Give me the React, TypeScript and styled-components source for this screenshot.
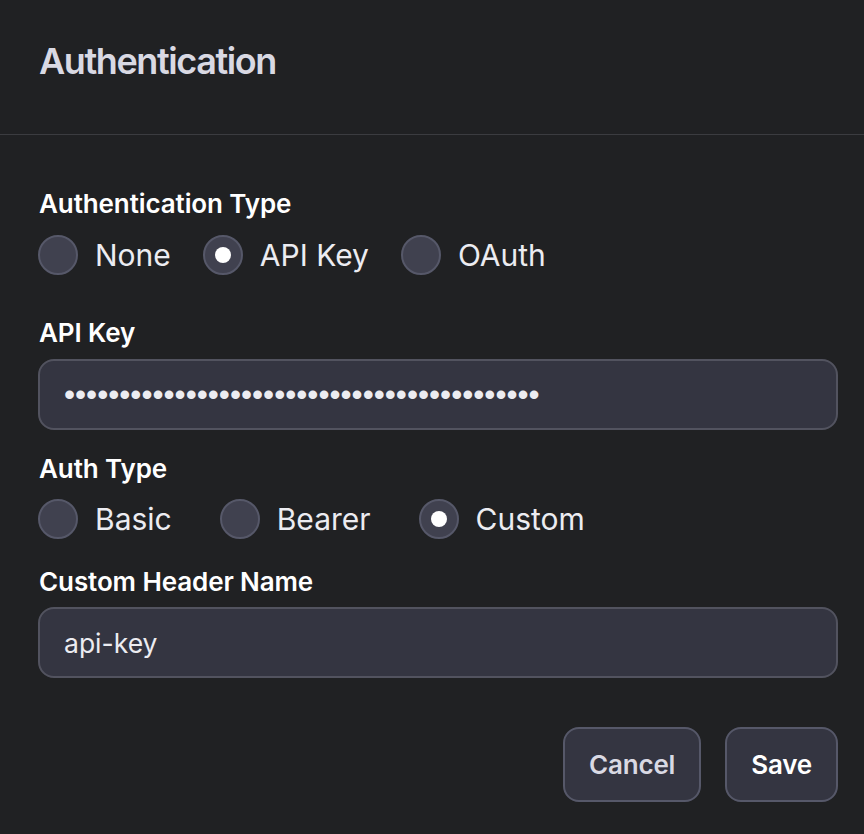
import React, { useState } from "react";
import styled, { createGlobalStyle } from "styled-components";

const GlobalStyle = createGlobalStyle`
  html, body {
    margin: 0;
    padding: 0;
    background: #202123;
  }
  body {
    font-family: Inter, "Noto Sans", "Liberation Sans", sans-serif;
    -webkit-font-smoothing: antialiased;
  }
  * { box-sizing: border-box; }
`;

const Dialog = styled.div`
  width: 864px;
  min-height: 834px;
  background: #202123;
  display: flex;
  flex-direction: column;
`;

const Header = styled.header`
  padding: 43px 39px 55px;
  border-bottom: 1px solid #3b3c40;
`;

const Title = styled.h2`
  margin: 0;
  font-size: 36px;
  line-height: 1;
  font-weight: 600;
  letter-spacing: -1.4px;
  color: #d9d9e3;
`;

const Body = styled.div`
  display: flex;
  flex-direction: column;
  padding: 56px 26px 32px 38px;
`;

const Field = styled.div<{ $gap: number; $top?: number }>`
  display: flex;
  flex-direction: column;
  gap: ${(p) => p.$gap}px;
  margin-top: ${(p) => p.$top ?? 0}px;
`;

const Label = styled.label`
  font-size: 26px;
  line-height: 25px;
  font-weight: 600;
  letter-spacing: -0.1px;
  color: #ffffff;
  padding-left: 1px;
`;

const RadioRow = styled.div<{ $gap: number }>`
  display: flex;
  align-items: center;
  gap: ${(p) => p.$gap}px;
`;

const RadioItem = styled.label`
  display: flex;
  align-items: center;
  gap: 17px;
  cursor: pointer;
  font-size: 30px;
  line-height: 1;
  color: #ececf1;
`;

const RadioCircle = styled.span<{ $checked: boolean }>`
  width: 40px;
  height: 40px;
  border-radius: 50%;
  background: #40414f;
  border: 2px solid #565869;
  display: flex;
  align-items: center;
  justify-content: center;
  flex-shrink: 0;

  &::after {
    content: "";
    width: 16px;
    height: 16px;
    border-radius: 50%;
    background: #ffffff;
    display: ${(p) => (p.$checked ? "block" : "none")};
  }
`;

const TextInput = styled.input<{ $secret?: boolean }>`
  width: 100%;
  height: 71px;
  border-radius: 16px;
  border: 2px solid #52535f;
  background: #343541;
  color: #ececf1;
  padding: 0 24px;
  font-family: ${(p) => (p.$secret ? '"Liberation Sans", Arial, sans-serif' : 'Inter, "Liberation Sans", sans-serif')};
  font-size: ${(p) => (p.$secret ? 31.6 : 26.5)}px;
  outline: none;
`;

const Footer = styled.div`
  display: flex;
  justify-content: flex-end;
  gap: 24px;
  margin-top: 49px;
`;

const Button = styled.button<{ $primary?: boolean }>`
  height: 75px;
  padding: 0 24px;
  border-radius: 16px;
  border: 2px solid #565869;
  background: #343541;
  color: ${(p) => (p.$primary ? "#ffffff" : "#d9d9e3")};
  font-family: Inter, "Liberation Sans", sans-serif;
  font-size: 26px;
  font-weight: 600;
  letter-spacing: -0.2px;
  cursor: pointer;
`;

type Opt = { value: string; label: string };

function RadioGroup({
  options,
  value,
  onChange,
  gap,
}: {
  options: Opt[];
  value: string;
  onChange: (v: string) => void;
  gap: number;
}) {
  return (
    <RadioRow $gap={gap} role="radiogroup">
      {options.map((o) => (
        <RadioItem key={o.value} onClick={() => onChange(o.value)}>
          <RadioCircle $checked={value === o.value} role="radio" aria-checked={value === o.value} />
          {o.label}
        </RadioItem>
      ))}
    </RadioRow>
  );
}

export default function App() {
  const [authType, setAuthType] = useState("api");
  const [subType, setSubType] = useState("custom");
  const [key, setKey] = useState("x".repeat(43));
  const [header, setHeader] = useState("api-key");

  return (
    <>
      <GlobalStyle />
      <Dialog>
        <Header>
          <Title>Authentication</Title>
        </Header>
        <Body>
          <Field $gap={19}>
            <Label>Authentication Type</Label>
            <RadioGroup
              gap={32}
              value={authType}
              onChange={setAuthType}
              options={[
                { value: "none", label: "None" },
                { value: "api", label: "API Key" },
                { value: "oauth", label: "OAuth" },
              ]}
            />
          </Field>
          <Field $gap={14} $top={45}>
            <Label>API Key</Label>
            <TextInput $secret type="password" value={key} onChange={(e) => setKey(e.target.value)} />
          </Field>
          <Field $gap={18} $top={26}>
            <Label>Auth Type</Label>
            <RadioGroup
              gap={48}
              value={subType}
              onChange={setSubType}
              options={[
                { value: "basic", label: "Basic" },
                { value: "bearer", label: "Bearer" },
                { value: "custom", label: "Custom" },
              ]}
            />
          </Field>
          <Field $gap={13} $top={30}>
            <Label>Custom Header Name</Label>
            <TextInput type="text" value={header} onChange={(e) => setHeader(e.target.value)} />
          </Field>
          <Footer>
            <Button>Cancel</Button>
            <Button $primary>Save</Button>
          </Footer>
        </Body>
      </Dialog>
    </>
  );
}
